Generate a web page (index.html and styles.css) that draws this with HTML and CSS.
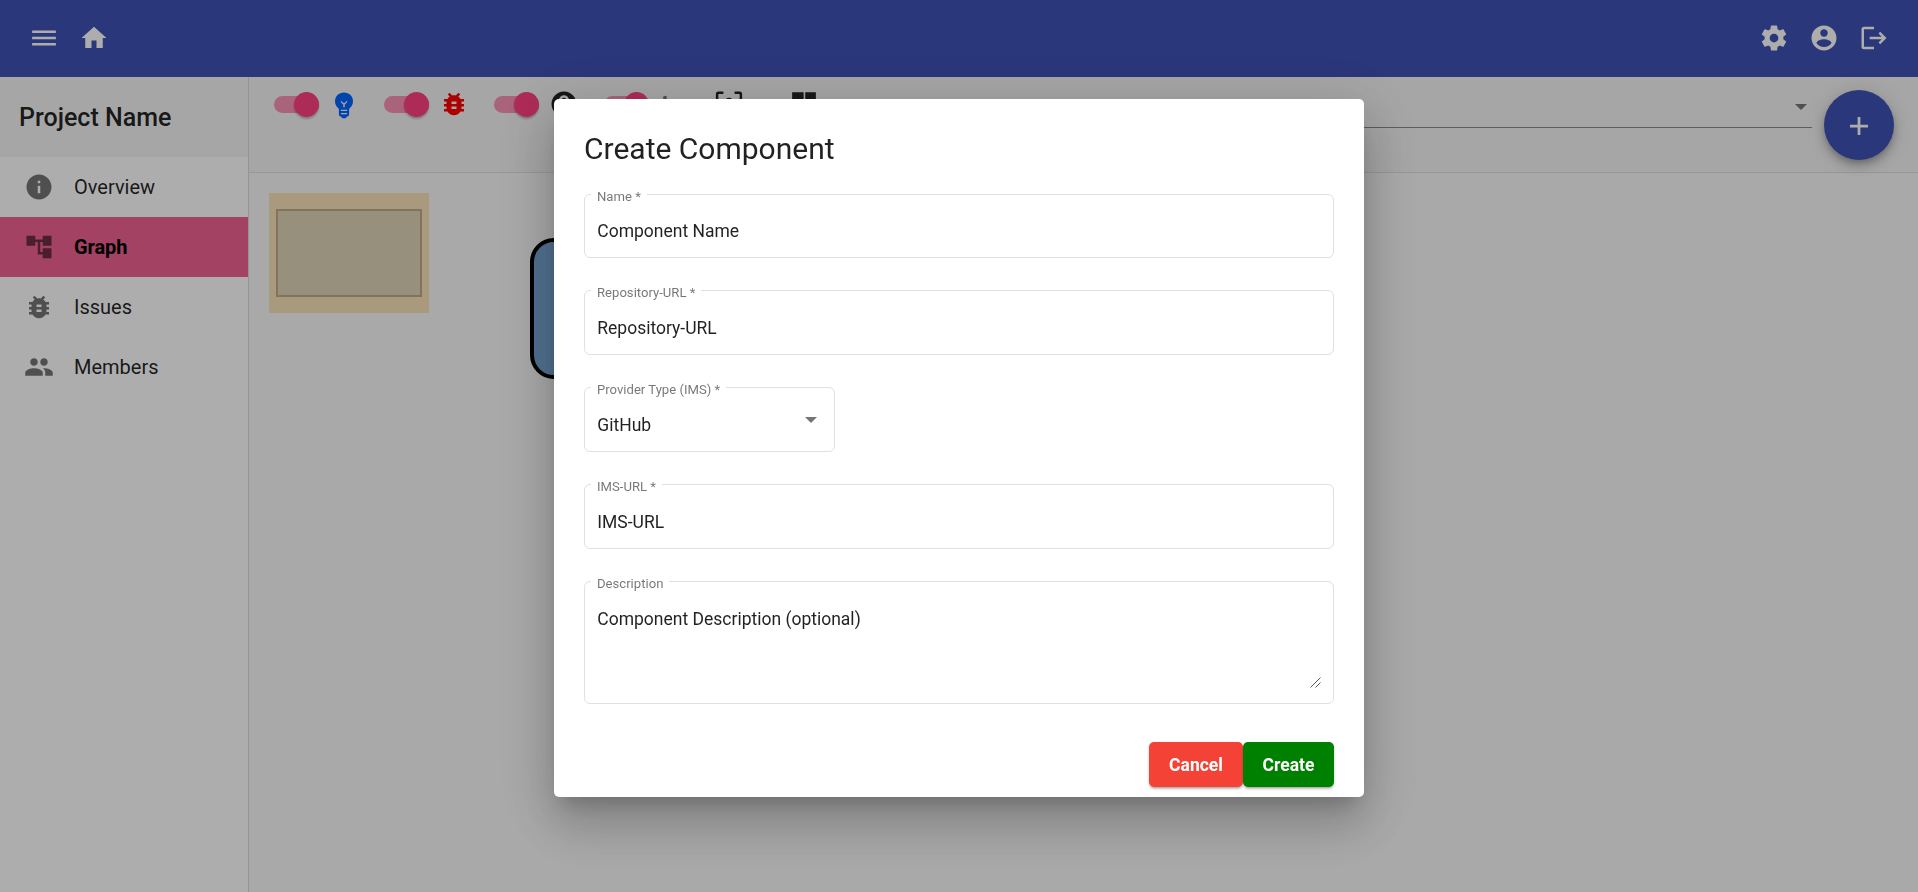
FILE: index.html
```html
<!DOCTYPE html>
<html lang="en">
<head>
<meta charset="utf-8">
<title>Create Component</title>
<link rel="stylesheet" href="styles.css">
</head>
<body>
<div class="app">
  <header class="topbar">
    <div class="group">
      <svg class="icon" viewBox="0 0 24 24"><path d="M2.500 18h19v-2h-19v2zm0-5h19v-2h-19v2zm0-7v2h19V6h-19z"/></svg>
      <svg class="icon" viewBox="0 0 24 24"><path d="M10 20v-6h4v6h5v-8h3L12 3 2 12h3v8z"/></svg>
    </div>
    <div class="group">
      <svg class="icon" viewBox="0 0 24 24"><path d="M12 15.5A3.5 3.5 0 0 1 8.500 12 3.500 3.500 0 0 1 12 8.500a3.500 3.500 0 0 1 3.500 3.500 3.500 3.500 0 0 1-3.500 3.500m7.430-2.530c.04-.32.07-.64.07-.97s-.03-.66-.07-1l2.110-1.630c.19-.15.24-.42.12-.64l-2-3.460c-.12-.22-.39-.31-.61-.22l-2.490 1c-.52-.39-1.060-.73-1.690-.98l-.37-2.650A.506.506 0 0 0 14 2h-4c-.25 0-.46.18-.5.42l-.37 2.650c-.63.25-1.170.59-1.690.98l-2.490-1c-.22-.09-.49 0-.61.22l-2 3.460c-.13.22-.07.49.12.64L4.570 11c-.04.34-.07.67-.07 1s.03.65.07.97l-2.110 1.660c-.19.15-.25.42-.12.64l2 3.460c.12.22.39.3.61.22l2.490-1.010c.52.4 1.060.74 1.690.99l.37 2.650c.04.24.25.42.5.42h4c.25 0 .46-.18.5-.42l.37-2.650c.63-.26 1.170-.59 1.690-.99l2.490 1.010c.22.08.49 0 .61-.22l2-3.460c.12-.22.07-.49-.12-.64z"/></svg>
      <svg class="icon" viewBox="0 0 24 24"><path d="M12 2C6.480 2 2 6.480 2 12s4.480 10 10 10 10-4.480 10-10S17.520 2 12 2zm0 3c1.660 0 3 1.340 3 3s-1.340 3-3 3-3-1.340-3-3 1.340-3 3-3zm0 14.200c-2.500 0-4.710-1.280-6-3.220.03-1.990 4-3.080 6-3.080 1.990 0 5.970 1.090 6 3.080-1.290 1.940-3.500 3.220-6 3.220z"/></svg>
      <svg class="icon" viewBox="0 0 24 24"><path d="M4 3h8v2H4v14h8v2H4a2 2 0 0 1-2-2V5a2 2 0 0 1 2-2zM8.500 11h9.670l-2.580-2.580L17 7l5 5-5 5-1.410-1.410L18.170 13H8.500z"/></svg>
    </div>
  </header>
  <div class="body">
    <nav class="sidebar">
      <div class="project">Project Name</div>
      <a class="item"><svg class="icon" viewBox="0 0 24 24"><path d="M12 2C6.480 2 2 6.480 2 12s4.480 10 10 10 10-4.480 10-10S17.520 2 12 2zm1 15h-2v-6h2v6zm0-8h-2V7h2v2z"/></svg>Overview</a>
      <a class="item active"><svg class="icon" viewBox="0 0 24 24"><path d="M22 11V3h-7v3H9V3H2v8h7V8h2v10h4v3h7v-8h-7v3h-2V8h2v3z"/></svg>Graph</a>
      <a class="item"><svg class="icon" viewBox="0 0 24 24"><path d="M20 8h-2.810c-.45-.78-1.070-1.450-1.820-1.960L17 4.410 15.590 3l-2.170 2.170C12.960 5.060 12.490 5 12 5s-.96.06-1.410.17L8.410 3 7 4.410l1.620 1.630C7.880 6.550 7.260 7.220 6.810 8H4v2h2.090c-.05.33-.09.66-.09 1v1H4v2h2v1c0 .34.04.67.09 1H4v2h2.810c1.040 1.790 2.970 3 5.190 3s4.150-1.210 5.190-3H20v-2h-2.090c.05-.33.09-.66.09-1v-1h2v-2h-2v-1c0-.34-.04-.67-.09-1H20V8zm-6 8h-4v-2h4v2zm0-4h-4v-2h4v2z"/></svg>Issues</a>
      <a class="item"><svg class="icon" viewBox="0 0 24 24"><path d="M16 11c1.660 0 2.990-1.340 2.990-3S17.660 5 16 5s-3 1.340-3 3 1.340 3 3 3zm-8 0c1.660 0 2.990-1.340 2.990-3S9.660 5 8 5 5 6.340 5 8s1.340 3 3 3zm0 2c-2.330 0-7 1.170-7 3.500V19h14v-2.500c0-2.330-4.670-3.500-7-3.500zm8 0c-.29 0-.62.02-.97.05 1.160.84 1.970 1.970 1.970 3.450V19h6v-2.500c0-2.330-4.670-3.500-7-3.500z"/></svg>Members</a>
    </nav>
    <main class="main">
      <div class="toolbar">
        <div class="filters">
          <div class="filter"><span class="toggle"></span><svg class="icon bulb" viewBox="0 0 24 24"><path fill-rule="evenodd" d="M12 .4c4.100 0 7.200 3.100 7.200 7 0 2.600-1.200 4.700-3.100 5.900v4.400c0 1-.6 1.700-1.500 1.900L13.200 21h-2.400l-1.400-1.400c-.9-.2-1.500-.9-1.500-1.900v-4.400C6 12.100 4.800 10 4.800 7.400c0-3.900 3.100-7 7.200-7zM9.500 6.900v1.300l1.900 1.700v2.200h1.200V9.900l1.900-1.700V6.900L12 9zM9.500 14.200v1h5v-1zm0 2.500v1h5v-1z"/></svg></div>
          <div class="filter"><span class="toggle"></span><svg class="icon bug" viewBox="0 0 24 24"><path d="M20 8h-2.810c-.45-.78-1.070-1.450-1.820-1.960L17 4.410 15.590 3l-2.170 2.170C12.960 5.060 12.490 5 12 5s-.96.06-1.410.17L8.410 3 7 4.410l1.620 1.630C7.880 6.550 7.260 7.220 6.810 8H4v2h2.090c-.05.33-.09.66-.09 1v1H4v2h2v1c0 .34.04.67.09 1H4v2h2.810c1.040 1.790 2.970 3 5.190 3s4.150-1.210 5.190-3H20v-2h-2.090c.05-.33.09-.66.09-1v-1h2v-2h-2v-1c0-.34-.04-.67-.09-1H20V8zm-6 8h-4v-2h4v2zm0-4h-4v-2h4v2z"/></svg></div>
          <div class="filter"><span class="toggle"></span><svg class="icon" viewBox="0 0 24 24"><path d="M12 2C6.480 2 2 6.480 2 12s4.480 10 10 10 10-4.480 10-10S17.520 2 12 2zm1 17h-2v-2h2v2zm2.070-7.750l-.9.920C13.450 12.900 13 13.500 13 15h-2v-.5c0-1.100.45-2.100 1.170-2.830l1.240-1.260c.37-.36.59-.86.59-1.410 0-1.100-.9-2-2-2s-2 .9-2 2H8c0-2.210 1.790-4 4-4s4 1.790 4 4c0 .88-.36 1.680-.93 2.250z"/></svg></div>
          <div class="filter"><span class="toggle"></span><svg class="icon dot" viewBox="0 0 24 24"><circle cx="4.800" cy="7" r="1.600"/></svg></div>
        </div>
        <svg class="icon fit" viewBox="0 0 24 24"><path d="M1.500 9V4a2 2 0 0 1 2-2h4v2h-4v5zM16.500 2h4a2 2 0 0 1 2 2v5h-2V4h-4zM1.500 15h2v5h4v2h-4a2 2 0 0 1-2-2zm19 0h2v5a2 2 0 0 1-2 2h-4v-2h4z"/><circle cx="12" cy="10" r="3"/></svg>
        <svg class="icon layout" viewBox="0 0 24 24"><path d="M2.500 2.500h9.200v10H2.500zM13 2.500h8.500V12H13zM2.500 14.500h9.200v7H2.500zM13 13.500h8.500v8H13z"/></svg>
        <div class="select"><span class="caret"></span></div>
        <div class="fab"><svg class="icon" viewBox="0 0 24 24"><path d="M19.200 13.100h-6.100v6.100h-2.200v-6.100H4.800v-2.200h6.100V4.800h2.200v6.100h6.100z"/></svg></div>
      </div>
      <div class="canvas">
        <div class="minimap"><div class="viewport"></div></div>
        <div class="node"></div>
      </div>
    </main>
  </div>
</div>
<div class="backdrop">
  <section class="dialog">
    <h1>Create Component</h1>
    <form class="form">
      <fieldset class="field"><legend>Name *</legend><span>Component Name</span></fieldset>
      <fieldset class="field"><legend>Repository-URL *</legend><span>Repository-URL</span></fieldset>
      <fieldset class="field short"><legend>Provider Type (IMS) *</legend><span>GitHub</span><i class="caret"></i></fieldset>
      <fieldset class="field"><legend>IMS-URL *</legend><span>IMS-URL</span></fieldset>
      <fieldset class="field tall"><legend>Description</legend><span>Component Description (optional)</span><svg class="grip" viewBox="0 0 11 11"><path d="M.5 10.500l10-10M5.500 10.500l5-5"/></svg></fieldset>
    </form>
    <div class="actions"><button class="btn cancel">Cancel</button><button class="btn create">Create</button></div>
  </section>
</div>
</body>
</html>
```
FILE: styles.css
```css
* { box-sizing: border-box; }
body { margin: 0; font-family: Roboto, sans-serif; color: rgba(0,0,0,.87); overflow: hidden; }
.app { height: 892px; display: flex; flex-direction: column; background: #fafafa; }
.icon { width: 30px; height: 30px; fill: currentColor; flex: none; display: block; }
.topbar { height: 77px; flex: none; background: #3f51b5; color: #fff; display: flex; align-items: center; justify-content: space-between; padding: 0 29px 1px; }
.group { display: flex; gap: 20px; }
.body { flex: 1; display: flex; min-height: 0; }
.sidebar { width: 249px; flex: none; background: #fff; border-right: 1px solid #dcdcdc; }
.project { height: 80px; background: #f5f5f5; padding-left: 19px; font-size: 25px; font-weight: 500; line-height: 81px; }
.item { height: 60px; display: flex; align-items: center; gap: 20px; padding-left: 24px; font-size: 20px; }
.item .icon { color: #757575; }
.item.active { background: #f06292; font-weight: 700; color: #000; letter-spacing: -.1px; }
.item.active .icon { color: #6f2d43; }
.main { flex: 1; display: flex; flex-direction: column; min-width: 0; }
.toolbar { height: 96px; flex: none; background: #f5f5f5; border-bottom: 1px solid #e0e0e0; display: flex; align-items: flex-start; padding: 12px 24px 0 25px; }
.filters { display: flex; gap: 25px; }
.filter { display: flex; gap: 10px; width: 85px; color: #212121; }
.toggle { width: 45px; height: 17px; border-radius: 9px; background: rgba(255,64,129,.54); margin-top: 7px; display: flex; align-items: center; justify-content: flex-end; flex: none; }
.toggle::after { content: ""; width: 25px; height: 25px; border-radius: 50%; background: #ff4081; box-shadow: 0 2px 2px rgba(0,0,0,.24); flex: none; }
.bulb { color: #0064ff; margin-top: 3px; }
.bug { color: #f00; }
.dot { color: #777; }
.fit { margin-left: 25px; color: #212121; }
.layout { margin-left: 45px; color: #212121; }
.select { flex: 1; height: 39px; margin: 0 12px 0 40px; border-bottom: 1px solid #8a8a8a; display: flex; justify-content: flex-end; padding: 15px 5px 0 0; }
.caret { width: 0; height: 0; border: 6.250px solid transparent; border-top-color: #757575; border-bottom: 0; }
.fab { width: 70px; height: 70px; margin-top: 1px; border-radius: 50%; background: #3f51b5; color: #fff; display: flex; align-items: center; justify-content: center; padding-top: 2px; box-shadow: 0 4px 6px -1px rgba(0,0,0,.2), 0 7px 12px rgba(0,0,0,.14), 0 1px 22px rgba(0,0,0,.12); }
.canvas { position: relative; flex: 1; }
.minimap { position: absolute; left: 20px; top: 20px; width: 160px; height: 120px; background: #fbe4b9; padding: 16px 7px; }
.viewport { height: 88px; border: 2px solid #c2ac84; background: #ded5b9; }
.node { position: absolute; left: 281px; top: 65px; width: 180px; height: 141px; border: 4px solid #000; border-radius: 24px; background: #78a7d7; }
.backdrop { position: fixed; inset: 0; background: rgba(0,0,0,.32); display: flex; justify-content: center; align-items: flex-start; padding-top: 99px; }
.dialog { width: 810px; height: 698px; background: #fff; border-radius: 5px; padding: 30px 30px 0; box-shadow: 0 14px 19px -9px rgba(0,0,0,.2), 0 30px 48px 4px rgba(0,0,0,.14), 0 11px 58px 10px rgba(0,0,0,.12); }
h1 { margin: 0; font-size: 30px; line-height: 40px; font-weight: 400; }
.form { padding-top: 17px; display: flex; flex-direction: column; gap: 24.500px; }
.field { margin: 0; min-width: 0; height: 72.400px; border: 1px solid #e0e0e0; border-radius: 6px; padding: 0 12px; font-size: 17.500px; line-height: 20px; position: relative; }
.field legend { padding: 0 6px; margin-left: -6px; font-size: 13.125px; line-height: 16px; color: rgba(0,0,0,.54); position: relative; top: 2.500px; }
.field span { display: block; margin: 19.200px 0 0 .3px; }
.short { width: 251px; }
.short .caret { position: absolute; right: 17px; top: 21px; }
.tall { height: 130.500px; }
.grip { display: block; margin: 48.300px .5px 0 auto; width: 11px; height: 11px; fill: none; stroke: #555; }
.actions { display: flex; justify-content: flex-end; margin-top: 38px; }
.btn { height: 45px; border: 0; border-radius: 5px; color: #fff; font: 700 17.500px Roboto, sans-serif; padding: 1px 0 0; box-shadow: 0 3px 2px -2px rgba(0,0,0,.2), 0 2px 3px rgba(0,0,0,.2); }
.cancel { width: 94px; background: #f44336; }
.create { width: 91px; background: #008000; }
```
